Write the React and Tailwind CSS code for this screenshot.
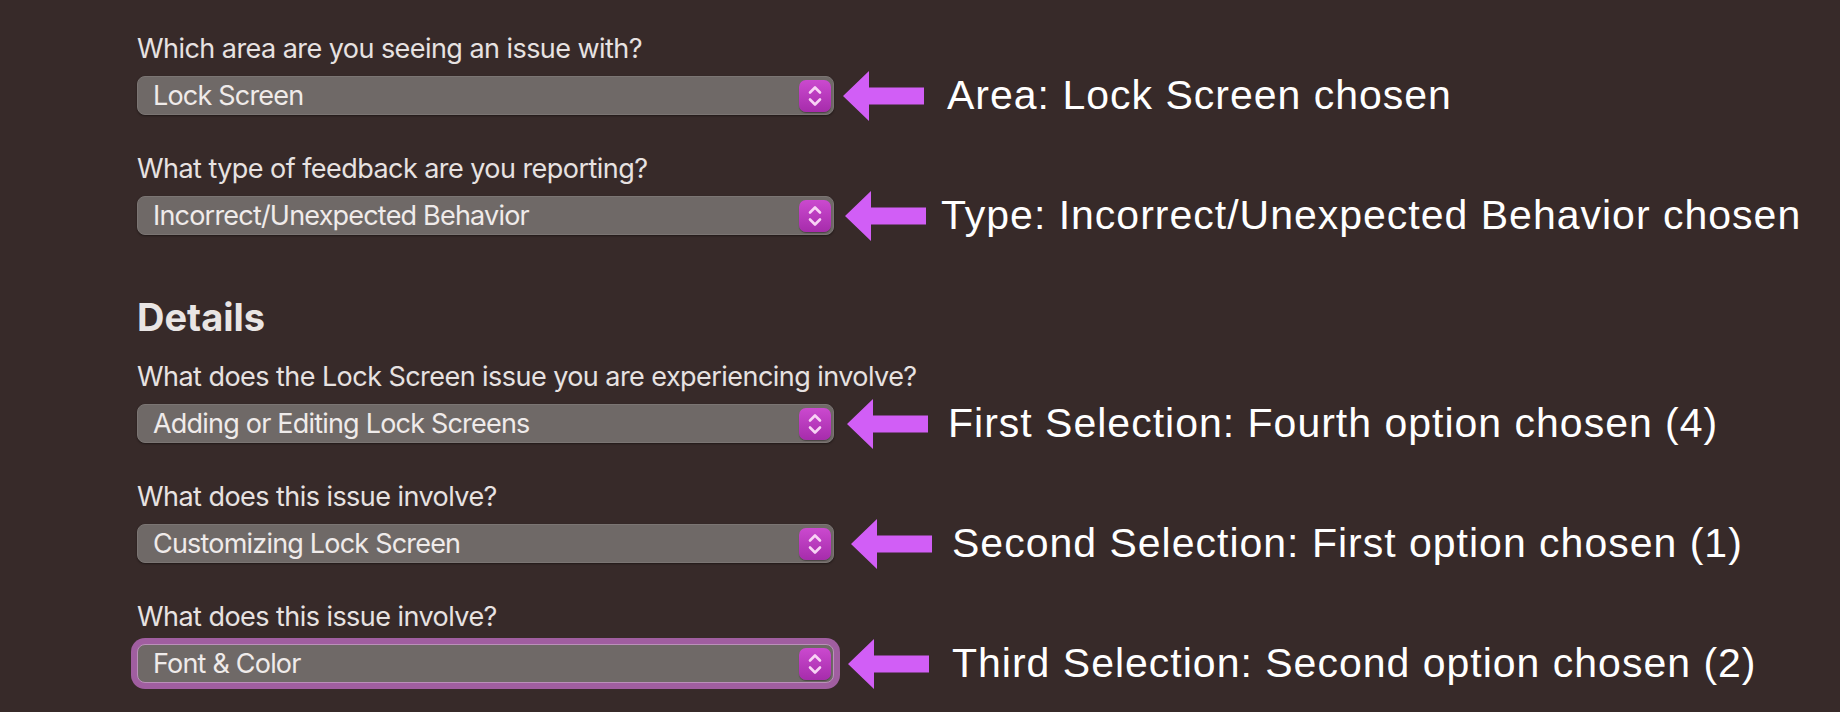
import React from "react";

const rows = [
  {
    label: "Which area are you seeing an issue with?",
    value: "Lock Screen",
    note: "Area: Lock Screen chosen",
    arrowGap: "ml-[9px]",
    textGap: "ml-[23px]",
  },
  {
    label: "What type of feedback are you reporting?",
    value: "Incorrect/Unexpected Behavior",
    note: "Type: Incorrect/Unexpected Behavior chosen",
    arrowGap: "ml-[11px]",
    textGap: "ml-[15px]",
  },
];

const details = [
  {
    label: "What does the Lock Screen issue you are experiencing involve?",
    value: "Adding or Editing Lock Screens",
    note: "First Selection: Fourth option chosen (4)",
    arrowGap: "ml-[13px]",
    textGap: "ml-[20px]",
  },
  {
    label: "What does this issue involve?",
    value: "Customizing Lock Screen",
    note: "Second Selection: First option chosen (1)",
    arrowGap: "ml-[17px]",
    textGap: "ml-[20px]",
  },
  {
    label: "What does this issue involve?",
    value: "Font & Color",
    note: "Third Selection: Second option chosen (2)",
    arrowGap: "ml-[14px]",
    textGap: "ml-[23px]",
    focused: true,
  },
];

function Stepper() {
  return (
    <div className="flex h-[32px] w-[32px] items-center justify-center rounded-[7px] bg-gradient-to-b from-[#cb49cf] to-[#a62cab] shadow-[0_1px_1px_rgba(0,0,0,0.35)]">
      <svg width="32" height="32" viewBox="0 0 32 32" fill="none">
        <path
          d="M11 12.5 L16 7.5 L21 12.5"
          stroke="#f8d2f5"
          strokeWidth="2.6"
          strokeLinecap="round"
          strokeLinejoin="round"
        />
        <path
          d="M11 19.5 L16 24.5 L21 19.5"
          stroke="#f8d2f5"
          strokeWidth="2.6"
          strokeLinecap="round"
          strokeLinejoin="round"
        />
      </svg>
    </div>
  );
}

function Arrow() {
  return (
    <svg width="81" height="50" viewBox="0 0 81 50" className="shrink-0">
      <polygon
        points="0,25 26,0 26,16.5 81,16.5 81,33.5 26,33.5 26,50"
        fill="#d15ef6"
      />
    </svg>
  );
}

function Field({ label, value, note, arrowGap, textGap, focused }) {
  return (
    <div className="flex flex-col">
      <div className="h-[32px] text-[27px] leading-[32px] tracking-[-0.55px] text-[#e7e2e1]">
        {label}
      </div>
      <div className="mt-[11px] flex h-[39px] items-center">
        <div
          className={`flex h-[39px] w-[697px] shrink-0 items-center justify-between rounded-[8px] border bg-[#6f6967] pl-[15px] pr-[2px] ${
            focused
              ? "border-[#bb90ba] shadow-[0_0_0_6px_#a05ea0]"
              : "border-[#7b7573] shadow-[0_1px_2px_rgba(0,0,0,0.4)]"
          }`}
        >
          <span className="text-[27px] leading-none tracking-[-0.8px] text-[#efebea]">{value}</span>
          <Stepper />
        </div>
        <div className={`${arrowGap} flex items-center`}>
          <Arrow />
        </div>
        <div
          className={`${textGap} whitespace-nowrap font-['Liberation_Sans',Arial,sans-serif] text-[41px] leading-none tracking-[1px] text-white`}
        >
          {note}
        </div>
      </div>
    </div>
  );
}

export default function App() {
  return (
    <div className="h-[712px] w-[1840px] overflow-hidden bg-[#372a29] pl-[137px] pt-[33px] font-['Inter','Noto_Sans',sans-serif]">
      <div className="flex flex-col gap-[38px]">
        {rows.map((r) => (
          <Field key={r.label} {...r} />
        ))}
      </div>
      <div className="mt-[60px] h-[44px] text-[38px] font-bold leading-[44px] text-[#e9e5e4]">
        Details
      </div>
      <div className="mt-[22px] flex flex-col gap-[38px]">
        {details.map((r) => (
          <Field key={r.note} {...r} />
        ))}
      </div>
    </div>
  );
}
